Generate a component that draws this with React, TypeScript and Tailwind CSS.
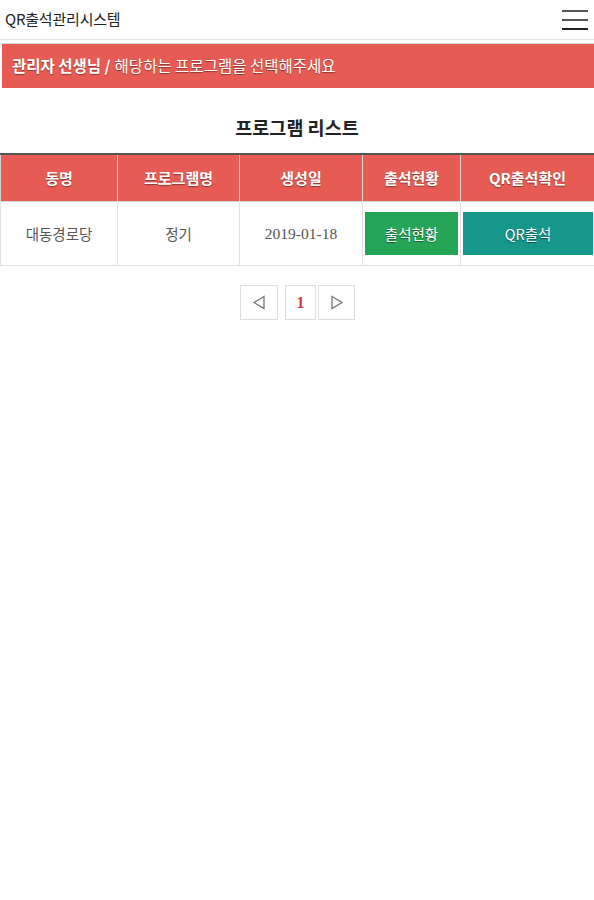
const font = { fontFamily: '"Noto Sans CJK KR", "Noto Sans", sans-serif' };

const headers = ['동명', '프로그램명', '생성일', '출석현황', 'QR출석확인'];

export default function App() {
  return (
    <div className="w-[594px] min-h-[900px] bg-white text-[#222]" style={font}>
      {/* top bar */}
      <div className="flex h-[40px] items-center justify-between border-b border-[#e4e4e4] pl-[5px] pr-[6px]">
        <span className="text-[15px] tracking-[-0.2px]">QR출석관리시스템</span>
        <div className="flex w-[26px] flex-col gap-[7px]">
          <span className="h-[2px] bg-[#555]" />
          <span className="h-[2px] bg-[#555]" />
          <span className="h-[2px] bg-[#222]" />
        </div>
      </div>

      {/* banner */}
      <div className="mt-[3px] ml-[2px] flex h-[45px] items-center border-t border-[#d9d9d9] bg-[#e65c55] pl-[10px] text-[15.5px] text-white [text-shadow:0_1px_1px_rgba(0,0,0,0.4)]">
        <span className="font-bold">관리자 선생님 /</span>
        <span className="ml-[4px]">해당하는 프로그램을 선택해주세요</span>
      </div>

      <h2 className="mt-[26px] text-center text-[18.5px] font-bold">프로그램 리스트</h2>

      {/* table */}
      <table className="mt-[11px] w-[594px] table-fixed border-collapse">
        <colgroup>
          <col className="w-[117px]" />
          <col className="w-[122px]" />
          <col className="w-[123px]" />
          <col className="w-[98px]" />
          <col className="w-[134px]" />
        </colgroup>
        <thead>
          <tr className="h-[48px] border-t-2 border-[#555] bg-[#e65c55]">
            {headers.map((h) => (
              <th
                key={h}
                className="border border-t-0 border-[#d5d5d5] text-[15px] font-bold text-white [text-shadow:0_1px_1px_rgba(0,0,0,0.4)]"
              >
                {h}
              </th>
            ))}
          </tr>
        </thead>
        <tbody>
          <tr className="h-[64px] text-[14.5px] text-[#555]">
            <td className="border border-[#e3e3e3] text-center">대동경로당</td>
            <td className="border border-[#e3e3e3] text-center">정기</td>
            <td className="border border-[#e3e3e3] text-center text-[15.5px] [font-family:'Liberation_Serif',serif]">2019-01-18</td>
            <td className="border border-[#e3e3e3] px-[2px]">
              <div className="flex h-[43px] items-center justify-center bg-[#27a556] text-[14.5px] text-white [text-shadow:0_1px_1px_rgba(0,0,0,0.45)]">
                출석현황
              </div>
            </td>
            <td className="border border-[#e3e3e3] pl-[2px] pr-[1px]">
              <div className="flex h-[43px] items-center justify-center bg-[#17968a] text-[14.5px] text-white [text-shadow:0_1px_1px_rgba(0,0,0,0.45)]">
                QR출석
              </div>
            </td>
          </tr>
        </tbody>
      </table>

      {/* pagination */}
      <div className="mt-[19px] flex justify-center pl-[1px]">
        <div className="flex items-center">
          <button className="flex h-[35px] w-[38px] items-center justify-center border border-[#dedede] text-[#777]">
            <svg width="14" height="15" viewBox="0 0 14 15" fill="none" stroke="currentColor" strokeWidth="1.3">
              <path d="M12 1.5 L2 7.5 L12 13.5 Z" />
            </svg>
          </button>
          <button className="ml-[7px] flex h-[35px] w-[31px] items-center justify-center border border-[#dedede] text-[16px] font-bold text-[#d9363e] [font-family:'Liberation_Serif',serif]">
            1
          </button>
          <button className="ml-[2px] flex h-[35px] w-[37px] items-center justify-center border border-[#dedede] text-[#777]">
            <svg width="14" height="15" viewBox="0 0 14 15" fill="none" stroke="currentColor" strokeWidth="1.3">
              <path d="M2 1.5 L12 7.5 L2 13.5 Z" />
            </svg>
          </button>
        </div>
      </div>
    </div>
  );
}
